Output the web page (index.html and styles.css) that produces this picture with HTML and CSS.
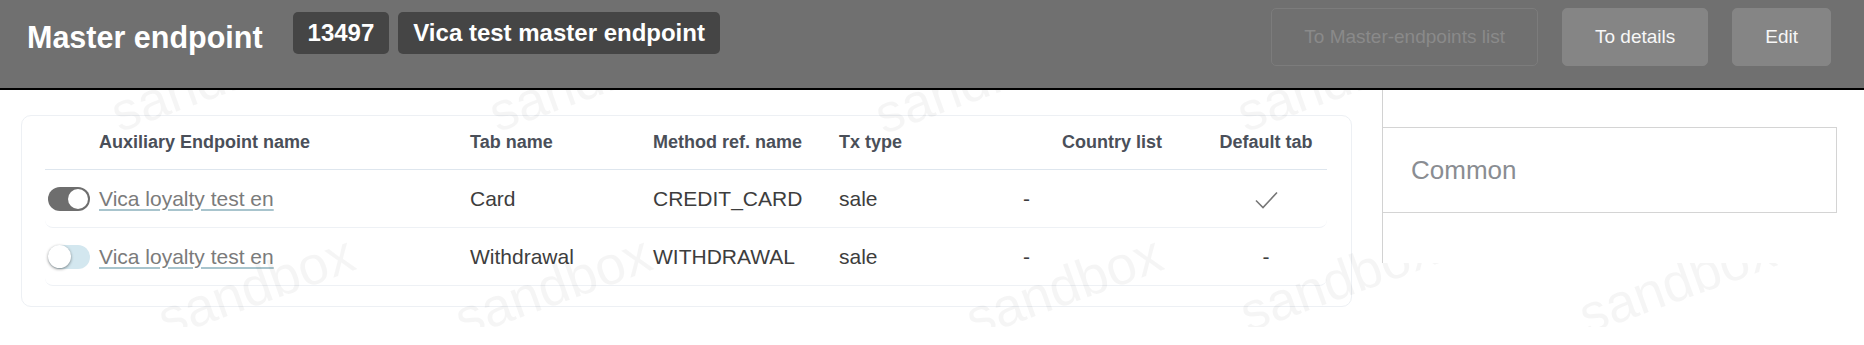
FILE: index.html
```html
<!DOCTYPE html>
<html lang="en">
<head>
    <meta charset="UTF-8">
    <meta name="viewport" content="width=device-width, initial-scale=1.0">
    <title>Master endpoint</title>
    <link rel="stylesheet" href="styles.css">
</head>
<body>
    <div class="watermarks">
        <span class="wm wm-1">sandbox</span>
        <span class="wm wm-2">sandbox</span>
        <span class="wm wm-3">sandbox</span>
        <span class="wm wm-4">sandbox</span>
        <span class="wm wm-5">sandbox</span>
        <span class="wm wm-6">sandbox</span>
        <span class="wm wm-7">sandbox</span>
        <span class="wm wm-8">sandbox</span>
        <span class="wm wm-9">sandbox</span>
    </div>

    <div class="topbar">
        <h1 class="page-title">Master endpoint</h1>
        <div class="badges">
            <span class="badge">13497</span>
            <span class="badge">Vica test master endpoint</span>
        </div>
        <div class="actions">
            <button class="btn btn-outline" disabled>To Master-endpoints list</button>
            <button class="btn">To details</button>
            <button class="btn">Edit</button>
        </div>
    </div>

    <div class="content">
        <div class="card">
            <div class="row row-head">
                <div class="cell cell-name">Auxiliary Endpoint name</div>
                <div class="cell">Tab name</div>
                <div class="cell">Method ref. name</div>
                <div class="cell">Tx type</div>
                <div class="cell cell-country">Country list</div>
                <div class="cell cell-center">Default tab</div>
            </div>
            <div class="row">
                <div class="cell cell-name">
                    <span class="toggle on"></span>
                    <a class="link" href="#">Vica loyalty test en</a>
                </div>
                <div class="cell">Card</div>
                <div class="cell">CREDIT_CARD</div>
                <div class="cell">sale</div>
                <div class="cell">-</div>
                <div class="cell cell-center">
                    <svg class="check" width="23" height="18" viewBox="0 0 23 18">
                        <polyline points="1,9.5 8,16.5 22,1.5" fill="none" stroke="#777" stroke-width="1.6"/>
                    </svg>
                </div>
            </div>
            <div class="row">
                <div class="cell cell-name">
                    <span class="toggle"></span>
                    <a class="link" href="#">Vica loyalty test en</a>
                </div>
                <div class="cell">Withdrawal</div>
                <div class="cell">WITHDRAWAL</div>
                <div class="cell">sale</div>
                <div class="cell">-</div>
                <div class="cell cell-center">-</div>
            </div>
        </div>

        <div class="side">
            <div class="side-tab">Common</div>
        </div>
    </div>
</body>
</html>
```

FILE: styles.css
```css
html, body {
    overflow: hidden;
}
body {
    margin: 0;
    height: 345px;
    position: relative;
    font-family: "Liberation Sans", Arial, sans-serif;
    background-color: #fff;
}

/* faint sandbox watermark */
.watermarks {
    position: absolute;
    top: 0;
    left: 0;
    right: 0;
    height: 327px;
    overflow: hidden;
    z-index: 1;
    pointer-events: none;
}
.wm {
    position: absolute;
    font-size: 54px;
    line-height: 54px;
    color: rgba(0, 0, 0, 0.04);
    transform: rotate(-20deg);
    transform-origin: 0 100%;
    white-space: nowrap;
}
.wm-1 { left: 122px; top: 86px; }
.wm-2 { left: 500px; top: 86px; }
.wm-3 { left: 886px; top: 88px; }
.wm-4 { left: 1248px; top: 86px; }
.wm-5 { left: 169px; top: 292px; }
.wm-6 { left: 466px; top: 292px; }
.wm-7 { left: 977px; top: 292px; }
.wm-8 { left: 1251px; top: 286px; }
.wm-9 { left: 1590px; top: 288px; }

.topbar {
    position: relative;
    z-index: 3;
    display: flex;
    align-items: center;
    height: 74px;
    padding: 0 33px 14px 27px;
    background-color: #707070;
    border-bottom: 2px solid #000;
}
.page-title {
    margin: 0;
    font-size: 30.5px;
    font-weight: bold;
    color: #fff;
}
.badges {
    display: flex;
    gap: 9px;
    margin-left: 30px;
    margin-bottom: 8px;
}
.badge {
    display: flex;
    align-items: center;
    height: 42px;
    padding: 0 15px;
    background-color: #454545;
    color: #fff;
    font-size: 24px;
    font-weight: bold;
    border-radius: 5px;
}
.actions {
    display: flex;
    gap: 24px;
    margin-left: auto;
}
.btn {
    height: 58px;
    padding: 0 32px;
    border: 1px solid #858585;
    background-color: #858585;
    color: #f7f7f7;
    font-family: inherit;
    font-size: 19px;
    border-radius: 5px;
    cursor: pointer;
}
.btn-outline {
    background-color: transparent;
    border-color: #7c7c7c;
    color: #8a8a8a;
    cursor: default;
}

.content {
    display: flex;
    align-items: flex-start;
    padding-left: 21px;
}
.card {
    width: 1331px;
    box-sizing: border-box;
    margin-top: 25px;
    padding: 0 24px 20px 23px;
    border: 1px solid #edf0f4;
    border-radius: 10px;
}
.row {
    display: grid;
    grid-template-columns: 425px 183px 186px 184px 182px 122px;
    align-items: center;
    height: 57px;
    border-bottom: 1px solid #eef1f5;
    border-radius: 0 0 8px 8px;
    font-size: 21px;
    color: #3d3d3d;
}
.row-head {
    height: 53px;
    border-bottom-color: #dee6ee;
    border-radius: 0;
    font-size: 18px;
    font-weight: bold;
    color: #4a4f59;
}
.row-head .cell-name {
    padding-left: 54px;
}
.cell-name {
    display: flex;
    align-items: center;
    gap: 9px;
    padding-left: 3px;
}
.cell-country {
    padding-left: 39px;
}
.cell-center {
    text-align: center;
}
.check {
    display: inline-block;
    vertical-align: middle;
}

.toggle {
    display: flex;
    align-items: center;
    justify-content: flex-start;
    width: 42px;
    height: 24px;
    border-radius: 12px;
    background-color: #d3e7ef;
}
.toggle::after {
    content: "";
    width: 23px;
    height: 23px;
    border-radius: 50%;
    background-color: #fff;
    box-shadow: 0 1px 3px rgba(0, 0, 0, 0.45);
}
.toggle.on {
    justify-content: flex-end;
    padding: 0 2px;
    box-sizing: border-box;
    background-color: #6e6e6e;
}
.toggle.on::after {
    width: 20px;
    height: 20px;
    box-shadow: none;
}
.link {
    color: #7b7b7b;
    text-decoration: underline;
    text-decoration-color: #a8c4cd;
    text-decoration-thickness: 2px;
    text-underline-offset: 3px;
}

.side {
    position: relative;
    z-index: 2;
    width: 455px;
    height: 173px;
    box-sizing: border-box;
    margin-left: 30px;
    padding-top: 37px;
    border-left: 1px solid #d2d2d2;
    background-color: #fff;
}
.side-tab {
    display: flex;
    align-items: center;
    height: 84px;
    padding-left: 28px;
    border: 1px solid #d4d4d4;
    border-left: none;
    font-size: 26px;
    color: #8a8d92;
}
```
